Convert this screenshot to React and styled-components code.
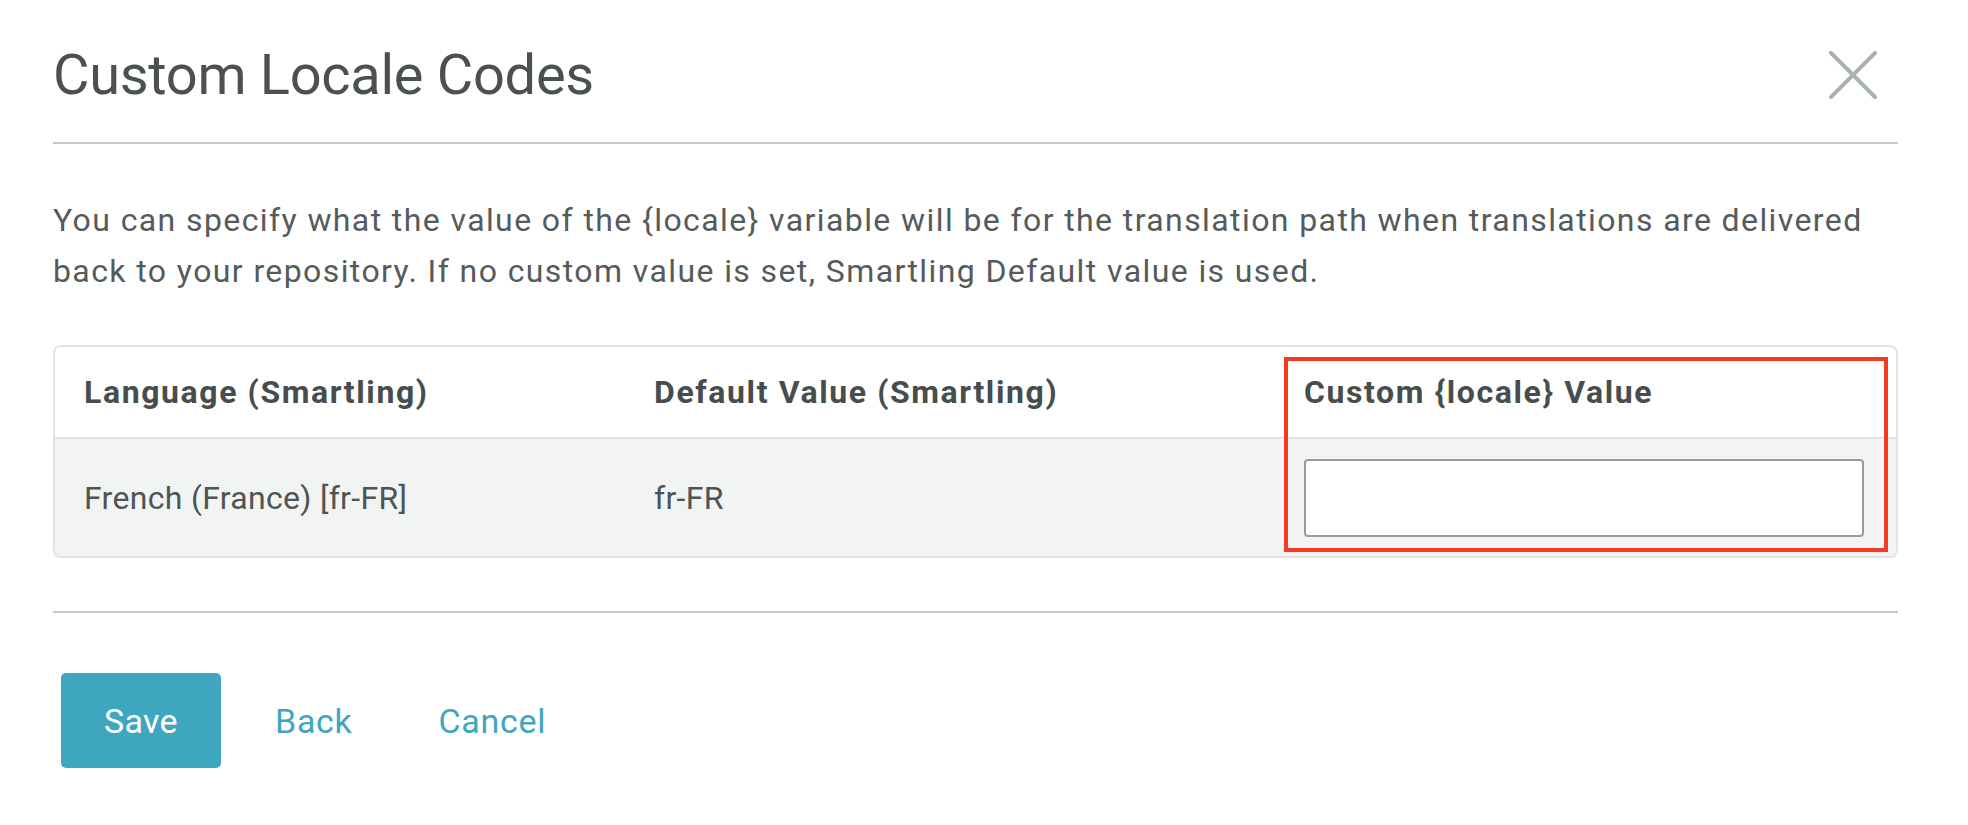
import React from "react";
import styled, { createGlobalStyle } from "styled-components";

const GlobalStyle = createGlobalStyle`
  * {
    box-sizing: border-box;
  }
  body {
    margin: 0;
    background: #ffffff;
    font-family: Roboto, "Liberation Sans", sans-serif;
    color: #4b5151;
  }
`;

const introText =
  "You can specify what the value of the {locale} variable will be for the translation path when translations are delivered back to your repository. If no custom value is set, Smartling Default value is used.";

const Dialog = styled.div`
  padding: 0 70px 0 53px;
`;

const Header = styled.header`
  height: 144px;
  display: flex;
  align-items: center;
  justify-content: space-between;
  border-bottom: 2px solid #c8c8c8;
  padding-top: 8px;
`;

const Title = styled.h1`
  margin: 0;
  font-size: 56px;
  font-weight: 400;
  color: #4b5151;
  letter-spacing: -0.3px;
`;

const CloseButton = styled.button`
  border: 0;
  background: none;
  padding: 0;
  margin-right: 21px;
  width: 48px;
  height: 48px;
  cursor: pointer;
  display: flex;
  align-items: center;
  justify-content: center;
`;

const Intro = styled.p`
  margin: 51px 0 0;
  font-size: 32px;
  line-height: 51px;
  color: #555b5b;
  letter-spacing: 1.4px;
`;

const Table = styled.div`
  position: relative;
  margin-top: 48px;
  border: 2px solid #e2e4e4;
  border-radius: 8px;
  overflow: hidden;
`;

const Row = styled.div`
  display: grid;
  grid-template-columns: 568px 650px 1fr;
  align-items: center;
  height: ${(p) => p.$height}px;
  background: ${(p) => (p.$head ? "#ffffff" : "#f2f4f4")};
  border-top: ${(p) => (p.$head ? "none" : "2px solid #e2e4e4")};
`;

const Cell = styled.div`
  padding: 0 32px 0 31px;
  font-size: 32px;
  font-weight: ${(p) => (p.$head ? 700 : 400)};
  color: ${(p) => (p.$head ? "#474d4d" : "#4e5454")};
  letter-spacing: ${(p) => (p.$head ? "1.6px" : "0.3px")};
  white-space: nowrap;

  &:first-child {
    padding-left: 29px;
  }
`;

const ValueInput = styled.input`
  display: block;
  width: 100%;
  height: 78px;
  border: 2px solid #9a9c9c;
  border-radius: 4px;
  background: #ffffff;
  font-size: 30px;
  padding: 0 16px;
  outline: none;
`;

const Highlight = styled.div`
  position: absolute;
  left: 1229px;
  top: 10px;
  width: 604px;
  height: 195px;
  border: 4px solid #f43a23;
  pointer-events: none;
`;

const Footer = styled.footer`
  margin-top: 53px;
  border-top: 2px solid #c8c8c8;
  padding: 60px 0 0 8px;
  display: flex;
  align-items: center;
`;

const PrimaryButton = styled.button`
  width: 160px;
  height: 95px;
  border: 0;
  border-radius: 5px;
  background: #3fa6c0;
  color: #ffffff;
  font-family: Roboto, "Liberation Sans", sans-serif;
  font-size: 34px;
  letter-spacing: 0.3px;
  cursor: pointer;
`;

const LinkButton = styled.button`
  border: 0;
  background: none;
  padding: 0;
  margin-left: ${(p) => p.$gap}px;
  color: #3fa6c0;
  font-family: Roboto, "Liberation Sans", sans-serif;
  font-size: 34px;
  letter-spacing: 0.7px;
  cursor: pointer;
`;

const CloseIcon = () => (
  <svg width="48" height="48" viewBox="0 0 48 48" fill="none">
    <path
      d="M2 2 L46 46 M46 2 L2 46"
      stroke="#a9b1b1"
      strokeWidth="4"
      strokeLinecap="square"
    />
  </svg>
);

const App = () => {
  return (
    <>
      <GlobalStyle />
      <Dialog>
        <Header>
          <Title>Custom Locale Codes</Title>
          <CloseButton aria-label="Close">
            <CloseIcon />
          </CloseButton>
        </Header>
        <Intro>{introText}</Intro>
        <Table>
          <Row $head $height={90}>
            <Cell $head>Language (Smartling)</Cell>
            <Cell $head>Default Value (Smartling)</Cell>
            <Cell $head>{"Custom {locale} Value"}</Cell>
          </Row>
          <Row $height={119}>
            <Cell>French (France) [fr-FR]</Cell>
            <Cell>fr-FR</Cell>
            <Cell>
              <ValueInput type="text" />
            </Cell>
          </Row>
          <Highlight />
        </Table>
        <Footer>
          <PrimaryButton>Save</PrimaryButton>
          <LinkButton $gap={54}>Back</LinkButton>
          <LinkButton $gap={86}>Cancel</LinkButton>
        </Footer>
      </Dialog>
    </>
  );
};

export default App;
